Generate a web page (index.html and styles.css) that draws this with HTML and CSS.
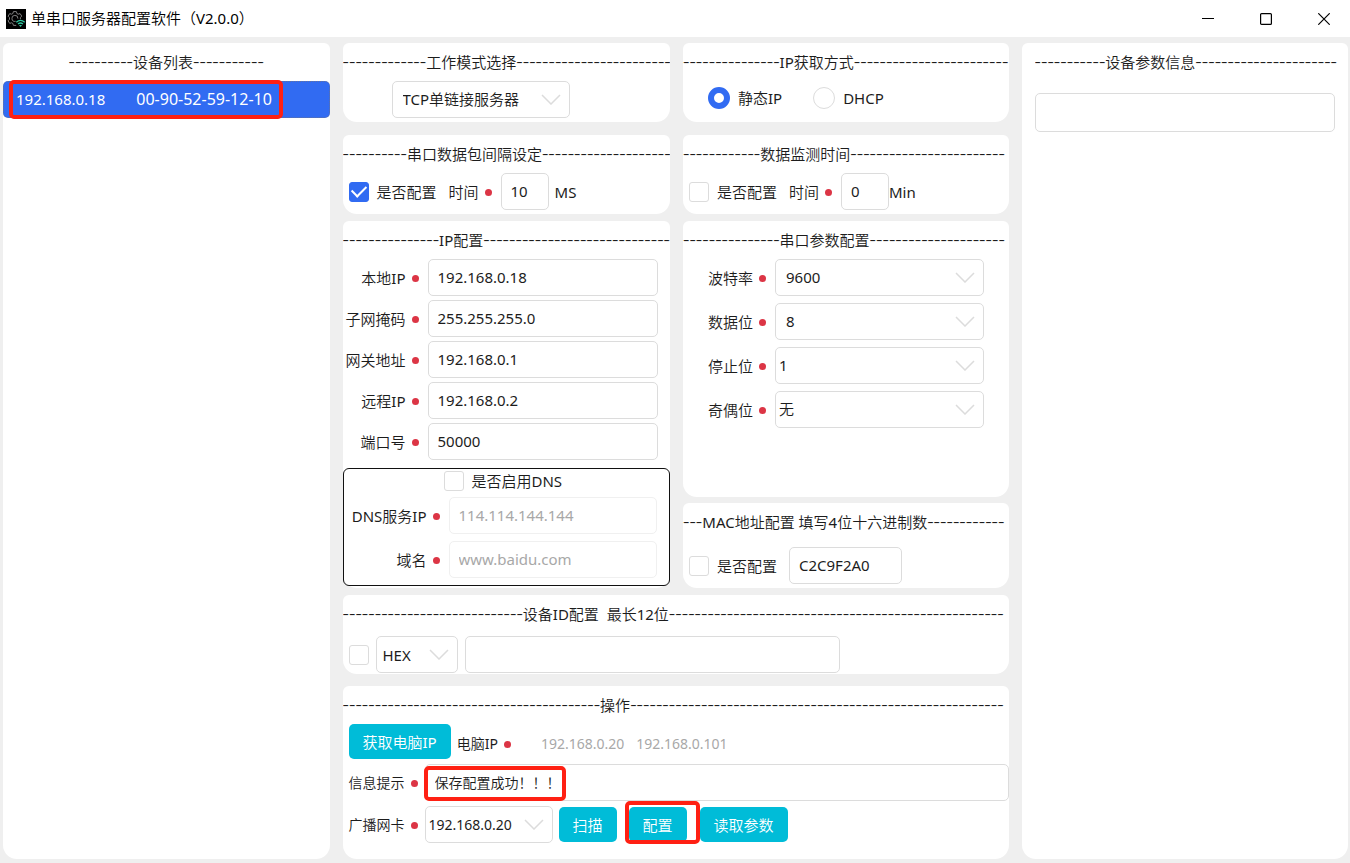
FILE: index.html
```html
<!DOCTYPE html>
<html lang="zh-CN">
<head>
<meta charset="utf-8">
<meta name="viewport" content="width=device-width, initial-scale=1">
<title>单串口服务器配置软件</title>
<link rel="stylesheet" href="styles.css">
</head>
<body>
<svg class="defs" width="0" height="0" aria-hidden="true">
  <symbol id="chevron" viewBox="0 0 20 11"><path d="M1 1l9 9 9-9" fill="none" stroke="#dcdcdc" stroke-width="1.5"/></symbol>
</svg>
<header class="titlebar">
  <svg class="app-icon" viewBox="0 0 20 20" aria-hidden="true">
    <rect width="20" height="20" fill="#000"/>
    <path d="M7.4 2.6h3l.5 1.9 1.3.7 1.9-.6 1.6 2.5-1.3 1.5v1.6M7.4 2.6l-.5 1.9-1.3.7-1.9-.6-1.6 2.6 1.4 1.4v1.8l-1.4 1.4 1.6 2.6 1.9-.6 1.3.7.5 1.9h2.8" fill="none" stroke="#808080"/>
    <path d="M11.9 9.6A3 3 0 1 0 9.6 12.3" fill="none" stroke="#808080"/>
    <path d="M10.3 13.2q4.2-3.6 8.4 0M12 15q2.5-2 5 0" fill="none" stroke="#2fc7a0" stroke-width="1.3"/>
    <path d="M13 16h3l-1.5 2z" fill="#2fc7a0"/>
  </svg>
  <h1 class="app-title">单串口服务器配置软件（V2.0.0）</h1>
  <div class="window-buttons">
    <button class="window-button" aria-label="最小化"><svg width="12" height="12"><path d="M0 5.5h12" stroke="#000"/></svg></button>
    <button class="window-button" aria-label="最大化"><svg width="12" height="12"><rect x=".6" y=".6" width="10.8" height="10.8" rx="1" fill="none" stroke="#000" stroke-width="1.2"/></svg></button>
    <button class="window-button" aria-label="关闭"><svg width="12" height="12"><path d="M.3.3l11.4 11.4M11.7.3L.3 11.7" stroke="#000" stroke-width="1.2"/></svg></button>
  </div>
</header>

<main class="layout">
  <section class="panel">
    <h2 class="heading heading-center"><span class="dash">----------</span>设备列表<span class="dash">-----------</span></h2>
    <button class="device"><span>192.168.0.18</span><span class="device-mac">00-90-52-59-12-10</span><span class="mark mark-device"></span></button>
  </section>

  <div class="center">
    <div class="pair pair-top">
      <section class="panel">
        <h2 class="heading"><span class="dash">-------------</span>工作模式选择<span class="dash">------------------------</span></h2>
        <div class="row row-mode">
          <span class="select select-mode"><select aria-label="工作模式"><option>TCP单链接服务器</option></select><svg class="chevron"><use href="#chevron"/></svg></span>
        </div>
      </section>
      <section class="panel">
        <h2 class="heading"><span class="dash">---------------</span>IP获取方式<span class="dash">------------------------</span></h2>
        <div class="row row-radio">
          <label class="choice"><input class="radio" type="radio" name="ipmode" checked>静态IP</label>
          <label class="choice"><input class="radio" type="radio" name="ipmode">DHCP</label>
        </div>
      </section>
    </div>

    <div class="pair pair-timing">
      <section class="panel">
        <h2 class="heading"><span class="dash">----------</span>串口数据包间隔设定<span class="dash">--------------------</span></h2>
        <div class="row">
          <label class="choice"><input class="check" type="checkbox" checked>是否配置</label>
          <label class="label label-time" for="gap">时间<i class="dot"></i></label>
          <input class="input input-tiny" id="gap" value="10"><span class="unit">MS</span>
        </div>
      </section>
      <section class="panel">
        <h2 class="heading"><span class="dash">------------</span>数据监测时间<span class="dash">------------------------</span></h2>
        <div class="row">
          <label class="choice"><input class="check" type="checkbox">是否配置</label>
          <label class="label label-time" for="watch">时间<i class="dot"></i></label>
          <input class="input input-tiny" id="watch" value="0"><span>Min</span>
        </div>
      </section>
    </div>

    <div class="pair pair-config">
      <section class="panel">
        <h2 class="heading"><span class="dash">---------------</span>IP配置<span class="dash">-----------------------------</span></h2>
        <div class="form form-ip">
          <label class="label" for="ip">本地IP<i class="dot"></i></label><input class="input" id="ip" value="192.168.0.18">
          <label class="label" for="mask">子网掩码<i class="dot"></i></label><input class="input" id="mask" value="255.255.255.0">
          <label class="label" for="gateway">网关地址<i class="dot"></i></label><input class="input" id="gateway" value="192.168.0.1">
          <label class="label" for="remote">远程IP<i class="dot"></i></label><input class="input" id="remote" value="192.168.0.2">
          <label class="label" for="port">端口号<i class="dot"></i></label><input class="input" id="port" value="50000">
        </div>
        <div class="dns">
          <label class="choice choice-dns"><input class="check" type="checkbox">是否启用DNS</label>
          <div class="form form-dns">
            <label class="label" for="dns">DNS服务IP<i class="dot"></i></label><input class="input" id="dns" value="114.114.144.144" disabled>
            <label class="label" for="domain">域名<i class="dot"></i></label><input class="input" id="domain" value="www.baidu.com" disabled>
          </div>
        </div>
      </section>
      <div class="stack">
        <section class="panel panel-grow">
          <h2 class="heading"><span class="dash">---------------</span>串口参数配置<span class="dash">---------------------</span></h2>
          <div class="form form-serial">
            <label class="label" for="baud">波特率<i class="dot"></i></label>
            <span class="select"><select id="baud"><option>9600</option></select><svg class="chevron"><use href="#chevron"/></svg></span>
            <label class="label" for="bits">数据位<i class="dot"></i></label>
            <span class="select"><select id="bits"><option>8</option></select><svg class="chevron"><use href="#chevron"/></svg></span>
            <label class="label" for="stop">停止位<i class="dot"></i></label>
            <span class="select select-tight"><select id="stop"><option>1</option></select><svg class="chevron"><use href="#chevron"/></svg></span>
            <label class="label" for="parity">奇偶位<i class="dot"></i></label>
            <span class="select select-tight"><select id="parity"><option>无</option></select><svg class="chevron"><use href="#chevron"/></svg></span>
          </div>
        </section>
        <section class="panel">
          <h2 class="heading"><span class="dash">---</span>MAC地址配置 填写4位十六进制数<span class="dash">------------</span></h2>
          <div class="row row-mac">
            <label class="choice"><input class="check" type="checkbox">是否配置</label>
            <input class="input input-mac" aria-label="MAC地址" value="C2C9F2A0">
          </div>
        </section>
      </div>
    </div>

    <section class="panel panel-id">
      <h2 class="heading"><span class="dash">----------------------------</span>设备ID配置&nbsp; 最长12位<span class="dash">----------------------------------------------------</span></h2>
      <div class="row row-id">
        <input class="check" type="checkbox" aria-label="配置设备ID">
        <span class="select select-hex"><select aria-label="ID格式"><option>HEX</option></select><svg class="chevron"><use href="#chevron"/></svg></span>
        <input class="input input-id" aria-label="设备ID">
      </div>
    </section>

    <section class="panel panel-grow">
      <h2 class="heading"><span class="dash">----------------------------------------</span>操作<span class="dash">----------------------------------------------------------</span></h2>
      <div class="actions">
        <div class="action-row action-pc">
          <button class="button">获取电脑IP</button>
          <span class="label">电脑IP<i class="dot"></i></span>
          <span class="addresses"><span>192.168.0.20</span><span>192.168.0.101</span></span>
        </div>
        <div class="action-row">
          <label class="label action-label" for="message">信息提示<i class="dot"></i></label>
          <span class="message"><input class="input" id="message" value="保存配置成功！！！"><span class="mark mark-message"></span></span>
        </div>
        <div class="action-row action-send">
          <label class="label action-label" for="card">广播网卡<i class="dot"></i></label>
          <span class="select select-card select-tight"><select id="card"><option>192.168.0.20</option></select><svg class="chevron"><use href="#chevron"/></svg></span>
          <button class="button">扫描</button>
          <span class="marked"><button class="button">配置</button><span class="mark mark-config"></span></span>
          <button class="button">读取参数</button>
        </div>
      </div>
    </section>
  </div>

  <section class="panel">
    <h2 class="heading heading-info"><span class="dash">-----------</span>设备参数信息<span class="dash">----------------------</span></h2>
    <div class="info"><input class="input" aria-label="设备参数信息"></div>
  </section>
</main>
</body>
</html>
```

FILE: styles.css
```css
* { box-sizing: border-box; }

body {
  display: flex;
  flex-direction: column;
  min-height: 100vh;
  margin: 0;
  background: #efefef;
  color: #1c1c1c;
  font: 15px/20px "Noto Sans", "Noto Sans CJK SC DemiLight", "Noto Sans CJK SC", sans-serif;
}

input, select, button {
  margin: 0;
  color: inherit;
  font: inherit;
}

.defs { position: absolute; }

.titlebar {
  display: flex;
  align-items: center;
  height: 37px;
  padding-left: 6px;
  background: #fff;
  color: #000;
}
.app-icon { width: 20px; height: 20px; }
.app-title { margin: 0 auto 0 5px; padding-bottom: 2px; font-size: 15px; font-weight: 400; }
.window-buttons { display: flex; gap: 6px; }
.window-button {
  display: grid;
  place-items: center;
  width: 52px;
  height: 35px;
  padding: 0;
  border: 0;
  background: none;
}

.layout {
  display: grid;
  flex: 1;
  grid-template-columns: repeat(4, minmax(0, 1fr));
  gap: 13px;
  padding: 6px 2px 4px 3px;
}
.center {
  display: flex;
  flex-direction: column;
  grid-column: span 2;
}
.pair {
  display: grid;
  grid-template-columns: minmax(0, 328fr) minmax(0, 326fr);
  gap: 13px;
}
.pair-top { margin-bottom: 13px; }
.pair-timing, .pair-config { margin-bottom: 7px; }
.stack { display: flex; flex-direction: column; gap: 6px; }

.panel { border-radius: 6px 6px 14px 14px; background: #fff; }
.panel-grow { flex: 1; }
.panel-id { margin-bottom: 12px; }

.heading {
  height: 38px;
  margin: 0;
  overflow: hidden;
  font-size: 15px;
  font-weight: inherit;
  line-height: 36px;
  white-space: nowrap;
}
.heading-center { text-align: center; }
.heading-info { margin: 0 0 0 13px; }
.dash { font-size: 20px; font-weight: 300; }

.device {
  position: relative;
  display: flex;
  align-items: center;
  gap: 31px;
  width: 100%;
  height: 37px;
  padding: 0 12px 2px;
  border: 1px dotted #66739b;
  border-radius: 5px;
  background: #316bf2;
  color: #fff;
}
.device-mac { font-size: 16px; }

.mark {
  position: absolute;
  border: 4px solid #ff2013;
  border-radius: 5px;
  pointer-events: none;
}
.mark-device { top: -2px; left: 5px; width: 274px; height: 39px; }
.mark-message { top: 2px; left: -1px; width: 142px; height: 35px; }
.mark-config { top: -6px; left: -4px; width: 75px; height: 43px; }

.row {
  display: flex;
  align-items: center;
  padding: 0 6px 4px;
}
.row-mode { padding-left: 49px; }
.row-radio { gap: 31px; min-height: 38px; padding-left: 25px; }
.row-mac { gap: 12px; padding-top: 6px; }
.row-id { gap: 7px; padding: 3px 6px 1px; }

.choice { display: flex; align-items: center; gap: 8px; }
.check, .radio {
  display: grid;
  flex: none;
  place-items: center;
  width: 20px;
  height: 20px;
  border: 1px solid #dcdcdc;
  border-radius: 3px;
  background: #fff;
  appearance: none;
}
.check:checked { border-color: #316bf2; background: #316bf2; }
.check:checked::after {
  width: 12px;
  height: 7px;
  margin-bottom: 4px;
  border: solid #fff;
  border-width: 0 0 2px 2px;
  content: "";
  transform: rotate(-45deg);
}
.radio { width: 22px; height: 22px; border-radius: 50%; }
.radio:checked { border: 6px solid #316bf2; }

.input, .select select {
  width: 100%;
  min-width: 0;
  height: 37px;
  padding: 0 9px 2px;
  border: 1px solid #dcdcdc;
  border-radius: 5px;
  background: #fff;
}
.input:disabled { border-color: #f0f0f0; color: #a8a8a8; }
.input-tiny { width: 48px; }
.input-mac { width: 113px; }
.input-id { width: 375px; }
.unit { margin-left: 6px; }
.info { padding: 12px 13px; }
.info .input { height: 39px; }

.select { display: grid; align-items: center; }
.select select { grid-area: 1 / 1; padding-left: 10px; appearance: none; }
.select.select-tight select { padding-left: 3px; }
.chevron {
  grid-area: 1 / 1;
  justify-self: end;
  width: 20px;
  height: 11px;
  margin-right: 9px;
  pointer-events: none;
}
.select-mode { width: 178px; }
.select-hex { width: 82px; }
.select-hex select { padding: 0 0 0 6px; }
.select-card { width: 128px; }
.select-card select { padding-bottom: 0; }

.label {
  display: flex;
  align-items: center;
  justify-content: flex-end;
  gap: 6px;
  white-space: nowrap;
}
.label-time { margin: 0 9px 0 12px; }
.dot {
  width: 7px;
  height: 7px;
  margin-top: 2px;
  border-radius: 50%;
  background: #dc3545;
}

.form { display: grid; align-items: center; }
.form-ip { grid-template-columns: 76px 1fr; gap: 4px 9px; padding: 0 12px 8px 0; }
.form-dns { grid-template-columns: 96px 1fr; gap: 7px 9px; padding-right: 12px; }
.form-serial { grid-template-columns: 83px 1fr; gap: 7px 9px; padding-right: 25px; }

.dns {
  margin-bottom: 2px;
  padding: 2px 0 7px;
  border: 1px solid #111;
  border-radius: 6px;
}
.choice-dns { margin: 0 0 6px 100px; }

.actions { display: flex; flex-direction: column; gap: 5px; padding-left: 6px; }
.action-row { display: flex; align-items: center; font-size: 14px; }
.action-pc { gap: 6px; }
.action-pc .label, .addresses { padding-top: 4px; }
.action-send { gap: 6px; }
.action-label { justify-content: flex-start; width: 76px; }
.action-send .action-label { margin-right: -6px; }
.addresses { display: flex; gap: 12px; margin-left: 24px; color: #a8a8a8; }
.message, .marked { position: relative; }
.message { flex: 1; }
.marked { margin: 0 7px 0 6px; }
.message .input { display: block; }

.button {
  height: 35px;
  padding: 0 14px;
  border: 0;
  border-radius: 5px;
  background: #00bcd8;
  color: #fff;
  font-size: 15px;
}
```
